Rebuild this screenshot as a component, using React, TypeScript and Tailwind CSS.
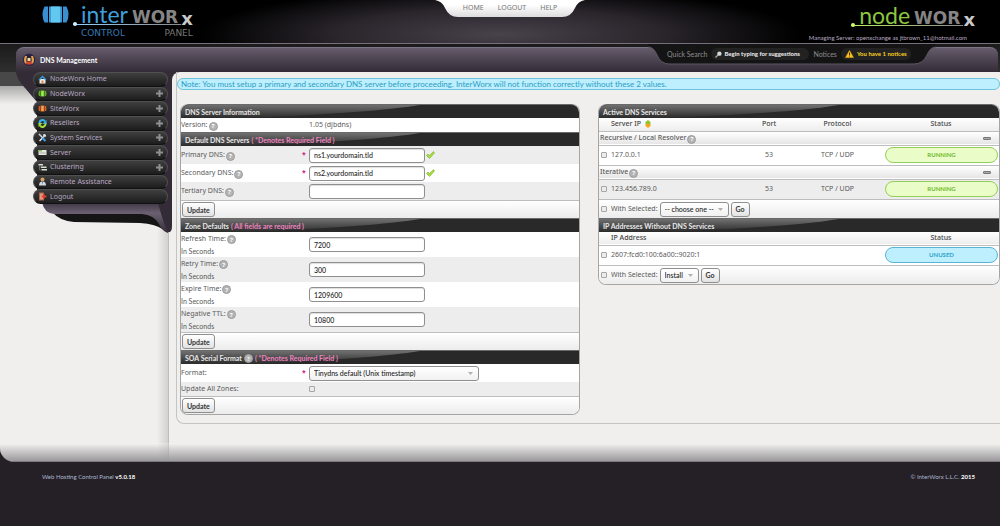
import type { ReactNode } from 'react';

const menu = [
  { label: 'NodeWorx Home', icon: 'home', more: false },
  { label: 'NodeWorx', icon: 'node', more: true },
  { label: 'SiteWorx', icon: 'site', more: true },
  { label: 'Resellers', icon: 'resellers', more: true },
  { label: 'System Services', icon: 'tools', more: true },
  { label: 'Server', icon: 'server', more: true },
  { label: 'Clustering', icon: 'cluster', more: true },
  { label: 'Remote Assistance', icon: 'person', more: false },
  { label: 'Logout', icon: 'logout', more: false },
];

const icons: Record<string, ReactNode> = {
  home: (
    <>
      <path d="M3 8h12v9H3z" fill="#e9edf0" />
      <path d="M9 1 1 9l2 2 6-6 6 6 2-2z" fill="#3d9be0" />
      <path d="M7 11h4v6H7z" fill="#e8893a" />
    </>
  ),
  node: (
    <>
      <path d="M4 4H2Q0 9 2 14h2zM14 4h2q2 5 0 10h-2z" fill="#5fae1e" />
      <path d="M5 3h8v12H5z" fill="#6cc32a" />
      <path d="M7 4h4v10H7z" fill="#a6ec5c" />
    </>
  ),
  site: (
    <>
      <path d="M4 4H2Q0 9 2 14h2zM14 4h2q2 5 0 10h-2z" fill="#d4611c" />
      <path d="M5 3h8v12H5z" fill="#dd6a22" />
      <path d="M7 4h4v10H7z" fill="#f7a463" />
    </>
  ),
  resellers: (
    <>
      <path d="M3 9a6 6 0 0 1 11-4" stroke="#35b3ee" strokeWidth="4" fill="none" />
      <path d="M17 2v8H9z" fill="#35b3ee" />
      <path d="M15 9a6 6 0 0 1-11 4" stroke="#a4e03c" strokeWidth="4" fill="none" />
      <path d="M1 16V8h8z" fill="#a4e03c" />
    </>
  ),
  tools: (
    <>
      <path d="m3 16 9-9" stroke="#e6eef5" strokeWidth="3" />
      <path d="M11 2a4 4 0 0 1 5 5l-3 1-3-3z" fill="#dfe7ee" />
      <path d="m9 10 6 6" stroke="#3f9be6" strokeWidth="4" />
      <path d="m2 2 7 7" stroke="#cfd8df" strokeWidth="3" />
    </>
  ),
  server: (
    <>
      <path d="M1 4h16v10H1z" fill="#e3e6dd" />
      <path d="M1 4h7v3H1z" fill="#8cc05a" />
      <path d="M3 9h12v1H3zM3 11h12v1H3z" fill="#a9aca4" />
    </>
  ),
  cluster: (
    <>
      <path d="M1 2h9v3H1zM6 7h11v3H6zM7 12h11v3H7z" fill="#d8dfd2" />
      <path d="M3 5v9h4M3 8h3" stroke="#93a387" fill="none" />
    </>
  ),
  person: (
    <>
      <circle cx="9" cy="5" r="4" fill="#d9a05f" />
      <path d="M2 17q0-8 7-8t7 8z" fill="#d5dbe3" />
      <path d="m8 9 1 7 1-7z" fill="#496a99" />
    </>
  ),
  logout: (
    <>
      <path d="M2 1h10v16H2z" fill="#b3624c" />
      <path d="M4 3h6v12H4z" fill="#d99a82" />
      <path d="M17 9h-7m3-4-4 4 4 4" stroke="#e8402a" strokeWidth="3" fill="none" />
    </>
  ),
};

function Icon({ name }: { name: string }) {
  return (
    <svg viewBox="0 0 18 18" className="size-[9px] shrink-0">
      {icons[name]}
    </svg>
  );
}

function Help() {
  return (
    <span className="mt-[2px] inline-flex size-[9px] shrink-0 items-center justify-center rounded-full border border-[#9c9c9c] bg-[#b4b4b4] text-[6px] leading-none font-bold text-white">
      ?
    </span>
  );
}

function Bar({ children, first }: { children: ReactNode; first?: boolean }) {
  return (
    <h2
      className={`relative flex h-[14px] items-center overflow-hidden border-t border-[#6a6a6a] bg-[#292929] px-1 font-[Lato,sans-serif] text-[7px] font-bold text-[#e8e8e8] ${first ? 'rounded-t-lg' : ''}`}
    >
      <svg viewBox="0 0 240 14" preserveAspectRatio="none" className="absolute inset-y-0 left-0 h-full w-3/5">
        <defs>
          <linearGradient id="gloss" x1="0" y1="0" x2="0" y2="1">
            <stop offset="0" stopColor="#707070" />
            <stop offset="1" stopColor="#2b2b2b" />
          </linearGradient>
        </defs>
        <path d="M0 0H240Q190 9 60 14H0Z" fill="url(#gloss)" />
      </svg>
      <span className="relative flex items-center gap-[2px] whitespace-nowrap">{children}</span>
    </h2>
  );
}

function Required({ children }: { children: ReactNode }) {
  return <span className="text-[#f183c0]">{children}</span>;
}

function Button({ children }: { children: ReactNode }) {
  return (
    <button
      type="button"
      className="h-[15px] rounded-[3px] border border-[#8f8f8f] bg-linear-to-b from-white to-[#e2e2e2] px-1 font-[Lato,sans-serif] text-[7px] font-bold text-[#333]"
    >
      {children}
    </button>
  );
}

function Field({
  id,
  label,
  value,
  hint,
  required,
  valid,
}: {
  id: string;
  label: string;
  value: string;
  hint?: string;
  required?: boolean;
  valid?: boolean;
}) {
  return (
    <div
      className={`grid grid-cols-[121px_7px_1fr] items-center ${hint ? 'h-[25px] odd:bg-white even:bg-[#ededed]' : 'h-[18px] odd:bg-[#ededed] even:bg-white'}`}
    >
      <div className="leading-3">
        <label htmlFor={id} className="flex items-center gap-px">
          {label}
          <Help />
        </label>
        {hint && <p className="font-[Lato,sans-serif]">{hint}</p>}
      </div>
      <span className="font-bold text-[#d0207c]">{required && '*'}</span>
      <div className="flex items-center gap-px">
        <input
          id={id}
          defaultValue={value}
          className="h-[15px] w-[116px] rounded-[3px] border border-[#8f8f8f] bg-white px-1 font-[Lato,sans-serif] text-[7px] font-medium text-[#222] shadow-[inset_0_1px_1px_#ddd]"
        />
        {valid && (
          <svg viewBox="0 0 18 16" className="h-2 w-[9px]">
            <path d="m1 9 3-3 3 3 8-8 2 3-10 11z" fill="#a5df3c" stroke="#68a31c" />
          </svg>
        )}
      </div>
    </div>
  );
}

function UpdateRow() {
  return (
    <div className="flex h-[18px] items-center border-t border-[#bdbdbd] bg-linear-to-b from-white to-[#ececec] px-px">
      <Button>Update</Button>
    </div>
  );
}

function Select({ id, option, className }: { id: string; option: string; className: string }) {
  return (
    <span className={`relative inline-flex ${className}`}>
      <select
        id={id}
        className="h-[15px] w-full appearance-none rounded-[3px] border border-[#8f8f8f] bg-linear-to-b from-white to-[#f1f1f1] px-1 font-[Lato,sans-serif] text-[7px] font-medium text-[#222]"
      >
        <option>{option}</option>
      </select>
      <svg viewBox="0 0 10 6" className="pointer-events-none absolute top-[6px] right-[6px] h-[3px] w-[5px]">
        <path d="M0 0h10L5 6z" fill="#b0b0b0" />
      </svg>
    </span>
  );
}

function Check({ label, id }: { label?: string; id?: string }) {
  return (
    <input
      type="checkbox"
      id={id}
      aria-label={label}
      className="block size-[6px] shrink-0 appearance-none rounded-[1px] border border-[#a5a5a5] bg-[#ececec] checked:bg-[#555]"
    />
  );
}

const pill = {
  RUNNING: 'border-[#93cf56] bg-[#eafcc8] text-[#6fb92c]',
  UNUSED: 'border-[#58b4d4] bg-[#bdeffe] text-[#2fa3cb]',
};

function Status({ value }: { value: keyof typeof pill }) {
  return (
    <span
      className={`mr-px ml-[2px] flex h-4 items-center justify-center rounded-full border font-[Lato,sans-serif] text-[6px] font-bold ${pill[value]}`}
    >
      {value}
    </span>
  );
}

function Group({ children }: { children: ReactNode }) {
  return (
    <tr className="h-[14px] border-y border-[#bdbdbd] bg-linear-to-b from-white to-[#e6e6e6]">
      <th colSpan={4} scope="rowgroup" className="pr-[8px] pl-px font-medium">
        <div className="flex items-center gap-px">
          {children}
          <Help />
          <span className="ml-auto h-[3px] w-2 rounded-[1px] border border-[#777] bg-[#aaa]" />
        </div>
      </th>
    </tr>
  );
}

function ServiceRow({ ip, shade }: { ip: string; shade?: boolean }) {
  return (
    <tr className={`h-5 ${shade ? 'bg-[#ededed]' : 'bg-white'}`}>
      <td className="pl-[2px]">
        <div className="flex items-center gap-1">
          <Check label={ip} />
          {ip}
        </div>
      </td>
      <td className="text-center">53</td>
      <td className="text-center">TCP / UDP</td>
      <td>
        <Status value="RUNNING" />
      </td>
    </tr>
  );
}

function WithSelected({ id, option, width }: { id: string; option: string; width: string }) {
  return (
    <div className="flex h-[19px] items-center gap-[2px] border-t border-[#bdbdbd] bg-linear-to-b from-white to-[#ececec] pl-[2px]">
      <Check label="Select all" />
      <label htmlFor={id} className="ml-[2px]">
        With Selected:
      </label>
      <Select id={id} option={option} className={width} />
      <Button>Go</Button>
    </div>
  );
}

function Wordmark({ name, color, line, dot }: { name: string; color: string; line: string; dot: string }) {
  return (
    <div className="relative flex h-[22px] items-baseline whitespace-nowrap">
      <span className={`font-[Lato,sans-serif] text-[23px] leading-[20px] ${color}`}>{name}</span>
      <span className="ml-1 font-['DejaVu_Sans',sans-serif] text-[17px] leading-[20px] font-bold text-[#858585]">WOR</span>
      <span className="relative top-[2px] ml-[3px] font-['DejaVu_Sans',sans-serif] text-[18px] leading-[16px] font-bold text-[#c9c9c9]">x</span>
      <span className={`absolute top-[20px] right-3 -left-2 h-px bg-linear-to-r ${line}`} />
      <span className={`absolute top-[18px] -left-2 size-1 rounded-full ${dot}`} />
    </div>
  );
}

function Header() {
  return (
    <header className="relative flex h-11 justify-between border-b border-[#77707c] bg-[radial-gradient(ellipse_30%_110%_at_50%_80%,#48424b,#29252b_55%,#000)] pr-[25px] pl-[42px]">
      <div className="flex gap-2 pt-1">
        <svg viewBox="0 0 54 34" className="mt-[2px] h-[17px] w-[27px]">
          <path d="M12 1H5Q-3 17 5 33h7zM42 1h7q8 16 0 32h-7z" fill="#3b8fd0" />
          <path d="M14 1h26v32H14z" fill="#3b9bdd" />
          <path d="M18 1h18v32H18z" fill="#63c8ee" />
        </svg>
        <div className="pl-1">
          <Wordmark name="inter" color="text-[#3f9fdc]" line="from-[#8fd0ff] to-[#8a8a8a]" dot="bg-[#d6f0ff]" />
          <p className="flex justify-between pt-px font-['DejaVu_Sans',sans-serif] text-[9px] leading-3">
            <span className="text-[#3579b0]">CONTROL</span>
            <span className="text-[#777]">PANEL</span>
          </p>
        </div>
      </div>
      <nav className="absolute top-0 left-[51%] flex h-[18px] w-[150px] -translate-x-1/2 justify-center">
        <svg viewBox="0 0 150 18" className="absolute inset-0 h-full w-full">
          <defs>
            <linearGradient id="tab" x1="0" y1="0" x2="0" y2="1">
              <stop offset="0.3" stopColor="#fff" />
              <stop offset="1" stopColor="#dcdcdc" />
            </linearGradient>
          </defs>
          <path d="M0 0q7 1 10 8 4 9 13 9h104q9 0 13-9 3-7 10-8z" fill="url(#tab)" />
        </svg>
        <div className="relative flex gap-[14px] text-[7px] leading-4 text-[#777]">
          <a href="#home">HOME</a>
          <a href="#logout">LOGOUT</a>
          <a href="#help">HELP</a>
        </div>
      </nav>
      <div className="flex flex-col items-end pt-[5px]">
        <Wordmark name="node" color="text-[#8cc63f]" line="from-[#b7f25a] to-[#8a8a8a]" dot="bg-[#c9ff6a]" />
        <p className="mr-2 pt-[5px] font-[Lato,sans-serif] text-[6px] leading-3 text-[#b7a9c2]">
          Managing Server: openxchange as jtbrown_11@hotmail.com
        </p>
      </div>
    </header>
  );
}

function TitleBar() {
  return (
    <div className="relative h-7 bg-linear-to-b from-[#1b1b1b] to-[#2f2f2f] pt-[3px] pr-[2px] pl-4">
      <div className="flex h-full items-center gap-1 rounded-t-lg border-t border-[#7d7585] bg-linear-to-b from-[#665c6c] to-[#332c36] pl-[6px]">
        <svg viewBox="0 0 28 28" className="size-[14px]">
          <circle cx="14" cy="14" r="13" fill="#2a2140" stroke="#594c66" />
          <path d="M6 6q-4 8 0 15h4q-3-7 0-15zM22 6q4 8 0 15h-4q3-7 0-15z" fill="#e2a24a" />
          <path d="M11 10h6v6h-6z" fill="#f3d9a0" />
          <path d="M9 17h10v6H9z" fill="#d8442e" />
        </svg>
        <h1 className="font-[Lato,sans-serif] text-[7px] font-bold text-white">DNS Management</h1>
      </div>
      <div className="absolute top-0 right-[64px] flex h-[21px] w-[288px] items-center pb-px pl-[19px] font-[Lato,sans-serif] text-[6px]">
        <svg viewBox="0 0 288 21" preserveAspectRatio="none" className="absolute inset-0 h-full w-full">
          <path d="M0 0V3q6 0 9 8 4 9 12 9h245q9 0 13-9 3-8 9-8V0z" fill="#151415" />
          <path d="M0 3q6 0 9 8 4 9 12 9h245q9 0 13-9 3-8 9-8" fill="none" stroke="#5d5563" />
        </svg>
        <div className="relative flex flex-1 items-center gap-1">
          <label htmlFor="quick" className="text-[7px] whitespace-nowrap text-[#8d8d8d]">
            Quick Search
          </label>
          <div className="flex h-3 w-[98px] items-center gap-[2px] rounded-full bg-[#222] pl-1">
            <svg viewBox="0 0 16 16" className="size-[7px] shrink-0">
              <path d="m1 15 6-6" stroke="#aaa" strokeWidth="3" />
              <circle cx="10" cy="6" r="5" fill="#d8d8d8" />
            </svg>
            <input
              id="quick"
              defaultValue="Begin typing for suggestions"
              className="w-full min-w-0 bg-transparent font-bold text-[#f0f0f0]"
            />
          </div>
          <span className="text-[7px] text-[#8d8d8d]">Notices</span>
          <a href="#notices" className="flex h-3 items-center gap-[3px] rounded-full bg-[#222] px-1 font-bold whitespace-nowrap text-[#f7cf1d]">
            <svg viewBox="0 0 18 16" className="h-2 w-[9px]">
              <path d="m9 1 8 14H1z" fill="#fbc31e" stroke="#f3a80c" />
              <path d="M8 5h2v5H8zM8 11h2v2H8z" fill="#443000" />
            </svg>
            You have 1 notices
          </a>
        </div>
      </div>
    </div>
  );
}

function Sidebar() {
  return (
    <aside className="relative w-[172px] shrink-0 pr-1 pl-[33px]">
      <div className="absolute inset-x-0 top-0 h-8 bg-[linear-gradient(#484848_0_14px,#aaa_14px,#f0efed)]" />
      <div className="absolute top-0 right-[3px] bottom-0 w-3 border-r border-[#bdbdbd] bg-linear-to-r from-transparent to-[#d2d0d0]" />
      <svg viewBox="0 0 172 162" className="absolute top-0 left-0 h-[162px] w-[172px]">
        <defs>
          <linearGradient id="tail" x1="0" y1="0" x2="0" y2="1">
            <stop offset="0" stopColor="#332c36" />
            <stop offset="0.4" stopColor="#6a6072" />
            <stop offset="1" stopColor="#332c36" />
          </linearGradient>
        </defs>
        <path d="M52 140q8 9 22 10l66 1q16 1 24 7V136z" fill="#161516" />
        <path d="M42 130q2 11 12 12h88q12 1 17 10 3 7 9 9V128z" fill="url(#tail)" />
        <path d="M16 0q1 8 9 16l12 14v101H158q6 22 10 29 4 1 4-6V0z" fill="#332c36" />
      </svg>
      <nav className="relative grid h-[132px] grid-rows-9">
        {menu.map((item) => (
          <a
            key={item.label}
            href="#menu"
            className="flex min-h-0 items-center gap-[3px] rounded-full border border-[#505050] border-b-[#111] bg-linear-to-b from-[#3f3f3f] to-[#1d1d1d] px-1 leading-3 text-[#b9a9c4]"
          >
            <Icon name={item.icon} />
            {item.label}
            {item.more && (
              <svg viewBox="0 0 14 14" className="ml-auto size-[7px]">
                <path d="M5 0h4v5h5v4H9v5H5V9H0V5h5z" fill="#8f8f8f" />
              </svg>
            )}
          </a>
        ))}
      </nav>
    </aside>
  );
}

function DnsForms() {
  return (
    <form className="overflow-hidden rounded-lg border-x border-b border-[#a5a5a5] bg-white">
      <Bar first>DNS Server Information</Bar>
      <div className="grid h-[14px] grid-cols-[128px_1fr] items-center">
        <span className="flex items-center gap-px">
          Version:
          <Help />
        </span>
        <span>1.05 (djbdns)</span>
      </div>

      <Bar>
        Default DNS Servers <Required>( *Denotes Required Field )</Required>
      </Bar>
      <div>
        <Field id="primary" label="Primary DNS:" value="ns1.yourdomain.tld" required valid />
        <Field id="secondary" label="Secondary DNS:" value="ns2.yourdomain.tld" required valid />
        <Field id="tertiary" label="Tertiary DNS:" value="" />
      </div>
      <UpdateRow />

      <Bar>
        Zone Defaults <Required>( All fields are required )</Required>
      </Bar>
      <div>
        <Field id="refresh" label="Refresh Time:" value="7200" hint="In Seconds" />
        <Field id="retry" label="Retry Time:" value="300" hint="In Seconds" />
        <Field id="expire" label="Expire Time:" value="1209600" hint="In Seconds" />
        <Field id="ttl" label="Negative TTL:" value="10800" hint="In Seconds" />
      </div>
      <UpdateRow />

      <Bar>
        SOA Serial Format <Help /> <Required>( *Denotes Required Field )</Required>
      </Bar>
      <div className="grid h-[18px] grid-cols-[121px_7px_1fr] items-center">
        <label htmlFor="format">Format:</label>
        <span className="font-bold text-[#d0207c]">*</span>
        <Select id="format" option="Tinydns default (Unix timestamp)" className="w-[170px]" />
      </div>
      <div className="grid h-[14px] grid-cols-[128px_1fr] items-center bg-[#ededed]">
        <label htmlFor="zones">Update All Zones:</label>
        <Check id="zones" />
      </div>
      <UpdateRow />
    </form>
  );
}

function Services() {
  return (
    <section className="overflow-hidden rounded-lg border-x border-b border-[#a5a5a5] bg-white">
      <Bar first>Active DNS Services</Bar>
      <table className="w-full table-fixed border-collapse text-left">
        <colgroup>
          <col />
          <col className="w-[46px]" />
          <col className="w-[91px]" />
          <col className="w-[116px]" />
        </colgroup>
        <thead>
          <tr className="h-[13px] bg-linear-to-b from-white to-[#ededed] text-[#444]">
            <th className="pl-3 font-medium">
              <div className="flex items-center gap-1">
                Server IP
                <svg viewBox="0 0 12 16" className="h-2 w-[6px]">
                  <path d="m6 0 5 4v4H1V4z" fill="#8fc52f" />
                  <path d="m6 16 5-4V8H1v4z" fill="#f3a51c" />
                </svg>
              </div>
            </th>
            <th className="text-center font-medium">Port</th>
            <th className="text-center font-medium">Protocol</th>
            <th className="text-center font-medium">Status</th>
          </tr>
        </thead>
        <tbody>
          <Group>Recursive / Local Resolver</Group>
          <ServiceRow ip="127.0.0.1" />
          <Group>Iterative</Group>
          <ServiceRow ip="123.456.789.0" shade />
        </tbody>
      </table>
      <WithSelected id="service-action" option="-- choose one --" width="w-[69px]" />

      <Bar>IP Addresses Without DNS Services</Bar>
      <table className="w-full table-fixed border-collapse text-left">
        <colgroup>
          <col />
          <col className="w-[116px]" />
        </colgroup>
        <thead>
          <tr className="h-[13px] border-b border-[#bdbdbd] bg-linear-to-b from-white to-[#ededed] text-[#444]">
            <th className="pl-3 font-medium">IP Address</th>
            <th className="text-center font-medium">Status</th>
          </tr>
        </thead>
        <tbody>
          <tr className="h-5">
            <td className="pl-[2px]">
              <div className="flex items-center gap-1">
                <Check label="2607:fcd0:100:6a00::9020:1" />
                2607:fcd0:100:6a00::9020:1
              </div>
            </td>
            <td>
              <Status value="UNUSED" />
            </td>
          </tr>
        </tbody>
      </table>
      <WithSelected id="ip-action" option="Install" width="w-[39px]" />
    </section>
  );
}

export default function App() {
  return (
    <div className="flex min-h-screen flex-col bg-[#251f26] font-['Noto_Sans',sans-serif] text-[7px] leading-3 text-[#5a5a5a]">
      <Header />
      <TitleBar />
      <main className="relative flex overflow-hidden rounded-bl-[14px] border-b border-[#7d7a7f] bg-[#f0efed]">
        <Sidebar />
        <div className="min-w-0 flex-1 bg-[linear-gradient(#332c36_16px,#f0efed_16px)]">
          <div className="rounded-tl-lg bg-[#f0efed] pb-[37px] pl-1">
            <div className="rounded-bl-lg border-b border-l border-[#c4c4c4] pt-[6px] pb-2">
              <p className="h-3 rounded-full border border-[#6fc3de] bg-[#bdeffe] px-[3px] font-[Lato,sans-serif] text-[8px] leading-[10px] text-[#2c9dc4]">
                Note: You must setup a primary and secondary DNS server before proceeding. InterWorx will not function correctly without these 2 values.
              </p>
              <div className="mt-[14px] grid grid-cols-[400fr_402fr] items-start gap-[18px] pl-[3px]">
                <DnsForms />
                <Services />
              </div>
            </div>
          </div>
        </div>
        <div className="pointer-events-none absolute inset-x-0 bottom-0 h-[18px] bg-linear-to-b from-white/30 to-[#9b999b]" />
      </main>
      <footer className="flex flex-1 justify-between pt-[9px] pr-[25px] pl-[42px] font-[Lato,sans-serif] text-[6px] text-[#a9b8cf]">
        <p>
          Web Hosting Control Panel <b className="text-white">v5.0.18</b>
        </p>
        <p>
          © InterWorx L.L.C. <b className="text-white">2015</b>
        </p>
      </footer>
    </div>
  );
}
